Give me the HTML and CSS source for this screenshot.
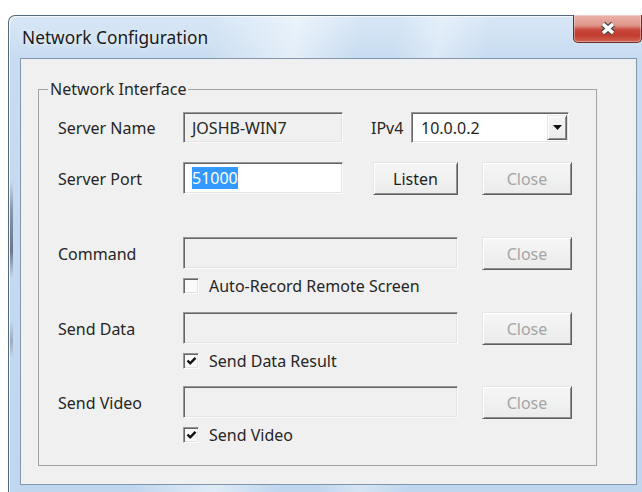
FILE: index.html
```html
<!DOCTYPE html>
<html lang="en">
<head>
<meta charset="utf-8">
<title>Network Configuration</title>
<link rel="stylesheet" href="styles.css">
</head>
<body>
<div class="window">
  <div class="titlebar">
    <span class="title">Network Configuration</span>
    <button class="close-btn" type="button" aria-label="Close">
      <svg width="18" height="15" viewBox="0 0 18 15" aria-hidden="true">
        <path d="M4 3 L14 12 M14 3 L4 12" stroke="#4a4a4a" stroke-width="6" fill="none"/>
        <path d="M4 3 L14 12 M14 3 L4 12" stroke="#ffffff" stroke-width="3.6" fill="none"/>
      </svg>
    </button>
  </div>

  <div class="client">
    <fieldset class="group">
      <legend>Network Interface</legend>

      <div class="row row-name">
        <span class="label">Server Name</span>
        <div class="field short">JOSHB-WIN7</div>
        <span class="ip-label">IPv4</span>
        <div class="combo">
          <span>10.0.0.2</span>
          <span class="combo-btn">
            <svg width="9" height="5" viewBox="0 0 9 5" aria-hidden="true"><path d="M0 0 H9 L4.5 5 Z" fill="#111"/></svg>
          </span>
        </div>
      </div>

      <div class="row row-port">
        <span class="label">Server Port</span>
        <div class="field short edit"><span class="sel">51000</span></div>
        <button class="btn btn-listen" type="button">Listen</button>
        <button class="btn btn-close" type="button" disabled>Close</button>
      </div>

      <div class="row row-cmd">
        <span class="label">Command</span>
        <div class="field wide"></div>
        <button class="btn btn-close" type="button" disabled>Close</button>
      </div>
      <label class="check">
        <span class="box"></span>
        <span>Auto-Record Remote Screen</span>
      </label>

      <div class="row row-data">
        <span class="label">Send Data</span>
        <div class="field wide"></div>
        <button class="btn btn-close" type="button" disabled>Close</button>
      </div>
      <label class="check">
        <span class="box"><svg width="11" height="10" viewBox="0 0 11 10" aria-hidden="true"><path d="M1.5 4.5 L4.2 7.3 L9.5 1.8" stroke="#111" stroke-width="2.4" fill="none"/></svg></span>
        <span>Send Data Result</span>
      </label>

      <div class="row row-video">
        <span class="label">Send Video</span>
        <div class="field wide"></div>
        <button class="btn btn-close" type="button" disabled>Close</button>
      </div>
      <label class="check">
        <span class="box"><svg width="11" height="10" viewBox="0 0 11 10" aria-hidden="true"><path d="M1.5 4.5 L4.2 7.3 L9.5 1.8" stroke="#111" stroke-width="2.4" fill="none"/></svg></span>
        <span>Send Video</span>
      </label>
    </fieldset>
  </div>
</div>
</body>
</html>
```
FILE: styles.css
```css
* { box-sizing: border-box; }

html, body { margin: 0; padding: 0; }

body {
  width: 642px;
  height: 492px;
  overflow: hidden;
  background: #ffffff;
  font-family: "Noto Sans", "Open Sans", sans-serif;
  font-size: 16px;
  line-height: 20px;
  color: #262626;
}

/* Aero-style window frame */
.window {
  margin: 15px 0 0 8px;
  width: 640px;
  height: 477px;
  display: flex;
  flex-direction: column;
  padding: 0 11px 7px 11px;
  border: 1px solid #56687d;
  border-right: 0;
  border-bottom: 0;
  border-radius: 7px 7px 0 0;
  background:
    linear-gradient(180deg, transparent 165px, rgba(55,65,80,.45) 195px, rgba(55,65,80,.65) 235px, transparent 262px, transparent 305px, rgba(55,65,80,.3) 325px, transparent 342px) 1px 0 / 3px 100% no-repeat,
    linear-gradient(100deg, rgba(255,255,255,0) 28%, rgba(255,255,255,.5) 40%, rgba(255,255,255,0) 49%, rgba(255,255,255,0) 54%, rgba(255,255,255,.35) 60%, rgba(255,255,255,0) 67%),
    linear-gradient(180deg, #d8e7f6 0, #c8dcf1 42px, #bfd6ee 100%);
  box-shadow: inset 1px 1px 0 rgba(255,255,255,.75);
}

.titlebar {
  flex: none;
  height: 42px;
  margin-right: -11px;
  display: flex;
  align-items: flex-start;
  justify-content: space-between;
}

.title {
  margin: 11px 0 0 2px;
  font-size: 17.3px;
  line-height: 22px;
  color: #1a1a1a;
  text-shadow: 0 0 7px rgba(255,255,255,.9);
}

.close-btn {
  width: 69px;
  height: 28px;
  margin: -1px 6px 0 0;
  padding: 0;
  display: flex;
  align-items: center;
  justify-content: center;
  border: 1px solid #6b2e29;
  border-top: 0;
  border-radius: 0 0 5px 5px;
  background: linear-gradient(180deg, #eab3ab 0, #df958b 38%, #c9483b 55%, #c13d30 75%, #d0634f 100%);
  box-shadow: inset 0 0 0 1px rgba(255,255,255,.35);
}

/* dialog client area */
.client {
  flex: 1;
  background: #f0f0f0;
  border: 1px solid #8395aa;
  padding: 20px 0 0 17px;
}

.group {
  width: 559px;
  margin: 0;
  padding: 13px 0 22px 19px;
  border: 1px solid #a3a3a3;
  min-inline-size: 0;
}

.group legend {
  padding: 0 2px;
  margin-left: -10px;
  line-height: 20px;
}

.row {
  display: flex;
  align-items: flex-start;
}

.row-port { margin-top: 19px; }
.row-cmd { margin-top: 42px; }
.row-data { margin-top: 18px; }
.row-video { margin-top: 17px; }

.label {
  flex: none;
  width: 125px;
  align-self: center;
}

/* sunken 3D edit frame */
.field,
.combo,
.box {
  border: 1px solid;
  border-color: #979797 #fbfbfb #fbfbfb #979797;
  box-shadow: inset 1px 1px 0 #666666, inset -1px -1px 0 #e3e3e3;
}

.field {
  flex: none;
  height: 32px;
  display: flex;
  align-items: center;
  padding: 0 8px;
  background: #f0f0f0;
}

.row-name .field { height: 31px; }

.field.edit { background: #ffffff; }
.field.short { width: 160px; }
.field.wide { width: 275px; }

.sel {
  background: #3399ff;
  color: #ffffff;
  line-height: 22px;
}

.ip-label {
  flex: none;
  width: 40px;
  margin-left: 28px;
  align-self: center;
}

.combo {
  flex: none;
  width: 158px;
  height: 31px;
  display: flex;
  align-items: center;
  justify-content: space-between;
  padding: 0 1px 0 9px;
  background: #ffffff;
}

/* raised 3D button frame */
.combo-btn,
.btn {
  border: 1px solid;
  border-color: #e6e6e6 #5e5e5e #5e5e5e #e6e6e6;
  box-shadow: inset 1px 1px 0 #ffffff, inset -1px -1px 0 #909090;
  background: linear-gradient(#f6f6f6, #ebebeb);
}

.combo-btn {
  width: 20px;
  height: 25px;
  display: flex;
  align-items: center;
  justify-content: center;
}

.btn {
  flex: none;
  width: 90px;
  height: 33px;
  padding: 0;
  font: inherit;
  color: #1f1f1f;
}

.btn:disabled { color: #a5a5a5; }

.btn-listen { width: 85px; margin-left: 30px; }
.btn-close { margin-left: 24px; }

.check {
  display: flex;
  align-items: center;
  gap: 10px;
  height: 17px;
  margin: 7px 0 0 125px;
}

.box {
  flex: none;
  width: 16px;
  height: 16px;
  display: flex;
  align-items: center;
  justify-content: center;
  background: #fafafa;
}
```
